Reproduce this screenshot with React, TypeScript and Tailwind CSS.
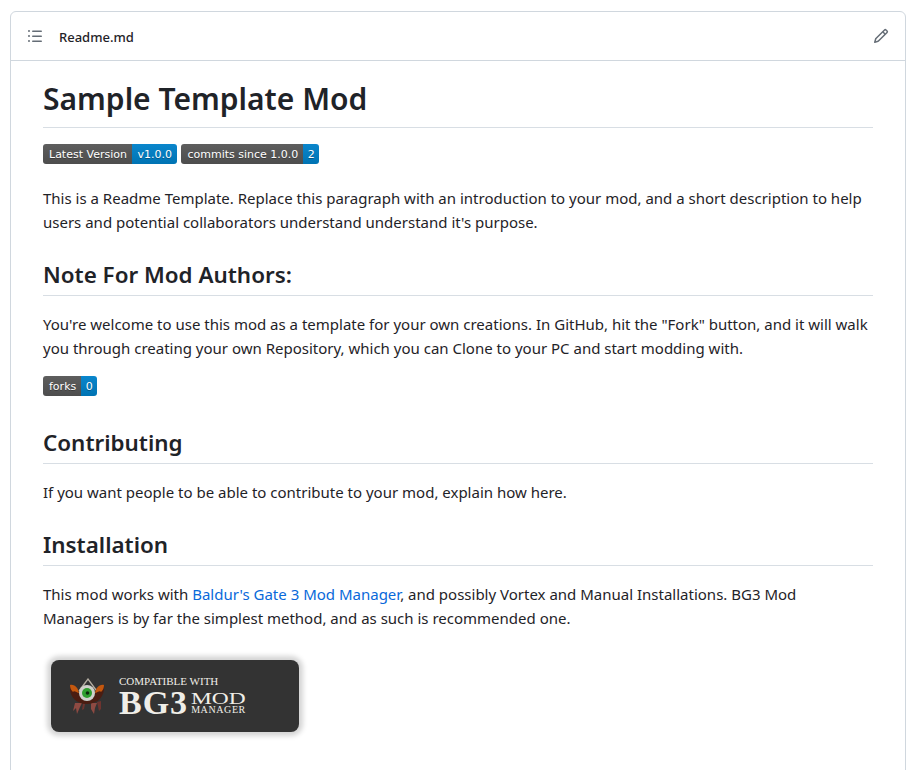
import React from "react";

const body = "font-['Noto_Sans','Open_Sans',sans-serif]";

function Badge({ l, r, narrow }: { l: string; r: string; narrow?: boolean }) {
  return (
    <span className="flex h-5 overflow-hidden rounded-[3px] font-['DejaVu_Sans',sans-serif] text-[11px] leading-[21px] text-white [text-shadow:0_1px_0_rgba(1,1,1,0.3)]">
      <span className="bg-gradient-to-b from-[#5e5e5e] to-[#4d4d4d] pl-[6px] pr-[5px]">{l}</span>
      <span className={`bg-gradient-to-b from-[#0a86cc] to-[#0073b3] ${narrow ? "px-[4.5px]" : "px-[5.5px]"}`}>{r}</span>
    </span>
  );
}

function Eye() {
  return (
    <svg width="36" height="37" viewBox="0 0 36 37" className="shrink-0">
      <path d="M9 13 L18 1 L26 12" stroke="#b5aea2" strokeWidth="1.3" fill="none" />
      <path d="M5 25 L3 33 L6 30 L7 36 L10 29 L12 25Z" fill="#8e4a42" />
      <path d="M13 25 L12 32 L14 31 L15 26Z" fill="#6e342f" />
      <path d="M21 25 L21 31 L24 36 L25 30 L27 25Z" fill="#8e4a42" />
      <path d="M27 24 L29 33 L31 31 L31 23Z" fill="#6e342f" />
      <path d="M0 7 C5 7 7 11 9 16 C11 21 14 23 17 23 C20 23 23 21 25 16 C27 11 29 7 34 7 C35 15 31 26 17 26 C3 26 -1 15 0 7Z" fill="#4a1d12" />
      <path d="M0 7 C5 6 8 10 9 15 C7 15 4 12 3 14 C1 12 0 10 0 7Z" fill="#c4580f" />
      <path d="M34 7 C29 6 26 10 25 15 C27 15 30 12 31 14 C33 12 34 10 34 7Z" fill="#c4580f" />
      <circle cx="17" cy="15" r="8" fill="#cfd0ca" />
      <circle cx="17" cy="15" r="5" fill="#2e9e2e" />
      <circle cx="17.5" cy="15" r="1.8" fill="#0c2a0c" />
    </svg>
  );
}

const h2 = "border-b border-[#d8dee4] text-[22.4px] font-semibold leading-[30px]";

export default function App() {
  return (
    <div className={`bg-white pl-[10px] pr-[11px] pt-[11px] text-[#1f2328] ${body}`}>
      <div className="h-[800px] rounded-t-md border border-[#d0d7de]">
        <div className="flex h-[49px] items-center justify-between border-b border-[#d0d7de] px-[16px]">
          <div className="flex items-center">
            <svg width="16" height="16" viewBox="0 0 16 16" fill="#656d76">
              <path d="M5.75 2.5h8.5a.75.75 0 0 1 0 1.5h-8.5a.75.75 0 0 1 0-1.5Zm0 5h8.5a.75.75 0 0 1 0 1.5h-8.5a.75.75 0 0 1 0-1.5Zm0 5h8.5a.75.75 0 0 1 0 1.5h-8.5a.75.75 0 0 1 0-1.5ZM2 14a1 1 0 1 1 0-2 1 1 0 0 1 0 2Zm1-6a1 1 0 1 1-2 0 1 1 0 0 1 2 0ZM2 4a1 1 0 1 1 0-2 1 1 0 0 1 0 2Z" />
            </svg>
            <span className="ml-[16px] mt-[3px] text-[13px] font-medium">Readme.md</span>
          </div>
          <svg width="16" height="16" viewBox="0 0 16 16" fill="#656d76">
            <path d="M11.013 1.427a1.75 1.75 0 0 1 2.474 0l1.086 1.086a1.75 1.75 0 0 1 0 2.474l-8.61 8.61c-.21.21-.47.364-.756.445l-3.251.93a.75.75 0 0 1-.927-.928l.929-3.25c.081-.286.235-.547.445-.758l8.61-8.61Zm.176 4.823L9.75 4.81l-6.286 6.287a.253.253 0 0 0-.064.108l-.558 1.953 1.953-.558a.253.253 0 0 0 .108-.064Zm1.238-3.763a.25.25 0 0 0-.354 0L10.811 3.75l1.439 1.44 1.263-1.263a.25.25 0 0 0 0-.354Z" />
          </svg>
        </div>
        <div className="px-[32px] pt-[18px] text-[15px] leading-[24px]">
          <h1 className="border-b border-[#d8dee4] pb-[8px] text-[30px] font-semibold leading-[40px]">Sample Template Mod</h1>
          <div className="mt-[16px] flex gap-[4px]">
            <Badge l="Latest Version" r="v1.0.0" />
            <Badge l="commits since 1.0.0" r="2" narrow />
          </div>
          <p className="mt-[22px]">This is a Readme Template. Replace this paragraph with an introduction to your mod, and a short description to help users and potential collaborators understand understand it's purpose.</p>
          <h2 className={`mt-[26px] pb-[5px] ${h2}`}>Note For Mod Authors:</h2>
          <p className="mt-[16px]">You're welcome to use this mod as a template for your own creations. In GitHub, hit the "Fork" button, and it will walk you through creating your own Repository, which you can Clone to your PC and start modding with.</p>
          <div className="mt-[16px] flex"><Badge l="forks" r="0" narrow /></div>
          <h2 className={`mt-[32px] pb-[5px] ${h2}`}>Contributing</h2>
          <p className="mt-[16px]">If you want people to be able to contribute to your mod, explain how here.</p>
          <h2 className={`mt-[26px] pb-[5px] ${h2}`}>Installation</h2>
          <p className="mt-[16px]">This mod works with <a className="text-[#0969da]">Baldur's Gate 3 Mod Manager</a>, and possibly Vortex and Manual Installations. BG3 Mod<br />Managers is by far the simplest method, and as such is recommended one.</p>
          <div className="ml-[8px] mt-[30px] flex h-[72px] w-[248px] items-center rounded-[8px] bg-[#333333] pl-[19px] shadow-[0_0_5px_4px_rgba(0,0,0,0.17)]">
            <Eye />
            <div className="-mt-[1px] ml-[13px] flex flex-col font-['Liberation_Serif',serif] text-[#f0eee8]">
              <span className="text-[11px] leading-[12px]">COMPATIBLE WITH</span>
              <div className="mt-[2px] flex items-center">
                <span className="text-[34px] font-bold leading-[28px] tracking-[1px]">BG3</span>
                <div className="ml-[3px] flex flex-col">
                  <span className="origin-left scale-x-[1.38] text-[17px] leading-[13px]">MOD</span>
                  <span className="text-[10px] leading-[9px] tracking-[0.6px]">MANAGER</span>
                </div>
              </div>
            </div>
          </div>
        </div>
      </div>
    </div>
  );
}
